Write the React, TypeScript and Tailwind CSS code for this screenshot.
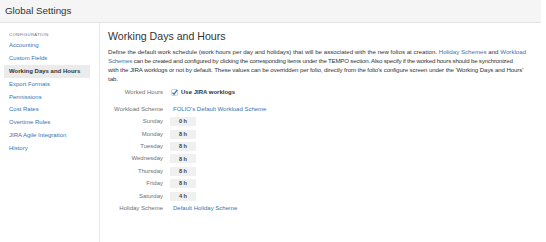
import React from "react";

const links = [
  "Accounting",
  "Custom Fields",
  "Working Days and Hours",
  "Export Formats",
  "Permissions",
  "Cost Rates",
  "Overtime Rules",
  "JIRA Agile Integration",
  "History",
];

const days: [string, string][] = [
  ["Sunday", "0 h"],
  ["Monday", "8 h"],
  ["Tuesday", "8 h"],
  ["Wednesday", "8 h"],
  ["Thursday", "8 h"],
  ["Friday", "8 h"],
  ["Saturday", "4 h"],
];

function Label({ children }: { children: React.ReactNode }) {
  return <div className="w-[55px] shrink-0 text-right text-[6px] text-[#707070] whitespace-nowrap">{children}</div>;
}

export default function App() {
  return (
    <div
      className="w-[546px] h-[242px] bg-white overflow-hidden text-[#333]"
      style={{ fontFamily: '"Liberation Sans", Arial, sans-serif' }}
    >
      <div className="w-[541px] h-[23px] bg-[#f5f5f5] border-b border-[#e3e3e3] flex items-center pl-[5px]">
        <span className="text-[9.8px] text-[#333]">Global Settings</span>
      </div>
      <div className="flex h-[219px]">
        <div className="w-[100px] shrink-0 border-r border-[#e8e8e8] pt-[9px] pl-[4px] pr-[9px]">
          <div className="pl-[5px] text-[4.3px] tracking-[0.3px] text-[#707070] h-[5px] leading-[5px]">CONFIGURATION</div>
          <div className="mt-[2.5px]">
            {links.map((l) =>
              l === "Working Days and Hours" ? (
                <div key={l} className="h-[12.8px] flex items-center pl-[5px] bg-[#ebebeb] text-[6px] font-bold text-[#333]">
                  {l}
                </div>
              ) : (
                <div key={l} className="h-[12.8px] flex items-center pl-[5px] text-[6px] text-[#3b73af]">
                  {l}
                </div>
              )
            )}
          </div>
        </div>
        <div className="flex-1 pl-[8px] pt-[6px] pr-[2px]">
          <div className="text-[10.6px] leading-[14px] text-[#333]">Working Days and Hours</div>
          <div className="mt-[4px] text-[6.15px] leading-[9px] text-[#333] whitespace-nowrap">
            <div>
              Define the default work schedule (work hours per day and holidays) that will be associated with the new folios at creation.{" "}
              <span className="text-[#3b73af]">Holiday Schemes</span> and{" "}
              <span className="text-[#3b73af]">Workload</span>
            </div>
            <div className="tracking-[-0.2px]">
              <span className="text-[#3b73af]">Schemes</span> can be created and configured by clicking the corresponding items under the TEMPO section. Also specify if the worked hours should be synchronized
            </div>
            <div className="tracking-[-0.11px]">
              with the JIRA worklogs or not by default. These values can be overridden per folio, directly from the folio's configure screen under the 'Working Days and Hours'
            </div>
            <div>tab.</div>
          </div>
          <div className="mt-[3.5px]">
            <div className="h-[12px] flex items-center gap-[7px]">
              <Label>Worked Hours</Label>
              <div className="flex items-center gap-[3px] pl-[1px]">
                <svg width="7" height="7" viewBox="0 0 7 7">
                  <rect x="0.5" y="0.5" width="6" height="6" rx="1" fill="#fff" stroke="#b5b5b5" strokeWidth="0.6" />
                  <path d="M1.5 3.6 L3 5.2 L6.3 0.8" fill="none" stroke="#3b73af" strokeWidth="1.2" />
                </svg>
                <span className="text-[6px] font-bold text-[#333]">Use JIRA worklogs</span>
              </div>
            </div>
            <div className="h-[12px] mt-[5px] flex items-center gap-[7px]">
              <Label>Workload Scheme</Label>
              <span className="pl-[3px] text-[6px] text-[#3b73af]">FOLIO's Default Workload Scheme</span>
            </div>
            {days.map(([d, v]) => (
              <div key={d} className="h-[12.4px] flex items-center gap-[7px]">
                <Label>{d}</Label>
                <div className="w-[26px] h-[9px] bg-[#f0f0f0] rounded-[1px] flex items-center justify-center text-[5.6px] font-semibold text-[#444]">
                  {v}
                </div>
              </div>
            ))}
            <div className="h-[12px] flex items-center gap-[7px]">
              <Label>Holiday Scheme</Label>
              <span className="pl-[3px] text-[6px] text-[#3b73af]">Default Holiday Scheme</span>
            </div>
          </div>
        </div>
      </div>
    </div>
  );
}
